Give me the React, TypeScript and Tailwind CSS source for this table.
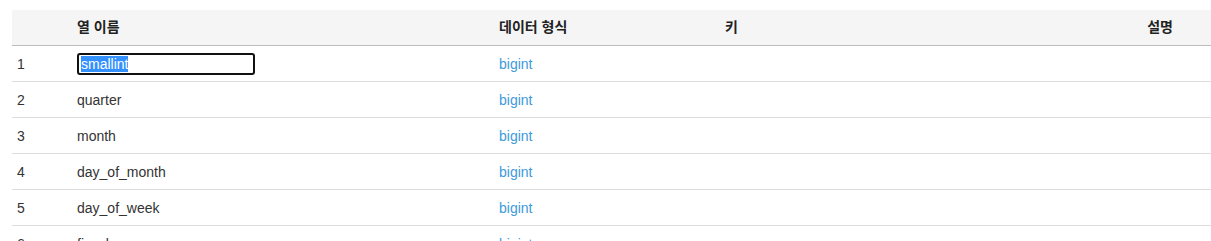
import React from "react";

type Col = { name: string; type: string };

const rows: Col[] = [
  { name: "smallint", type: "bigint" },
  { name: "quarter", type: "bigint" },
  { name: "month", type: "bigint" },
  { name: "day_of_month", type: "bigint" },
  { name: "day_of_week", type: "bigint" },
  { name: "fiscal_year", type: "bigint" },
];

const grid = "grid grid-cols-[60px_422px_226px_1fr]";

export default function App() {
  return (
    <div
      className="bg-white w-[1211px] h-[241px] overflow-hidden pt-[10px] pl-[12px] text-[14px] text-[#333]"
      style={{ fontFamily: '"Liberation Sans", Arial, "Noto Sans CJK KR", sans-serif' }}
    >
      <div className="w-[1199px]">
        {/* header */}
        <div className={`${grid} h-[36px] bg-[#f5f5f5] border-b border-[#bdbdbd] font-bold text-[#222] items-center`}>
          <div className="px-[5px]" />
          <div className="px-[5px]">열 이름</div>
          <div className="px-[5px]">데이터 형식</div>
          <div className="px-[5px] flex">
            <span>키</span>
            <span className="ml-auto pr-[33px]">설명</span>
          </div>
        </div>
        {rows.map((r, i) => (
          <div key={i} className={`${grid} h-[36px] border-b border-[#dddddd] items-center pt-[2px]`}>
            <div className="px-[5px]">{i + 1}</div>
            <div className="px-[5px]">
              {i === 0 ? (
                <div className="w-[178px] h-[22px] -mt-[2px] border-2 border-[#111] rounded-[3px] flex items-center pl-[2px]">
                  <span className="bg-[#3390ff] text-white leading-[16px]">{r.name}</span>
                </div>
              ) : (
                r.name
              )}
            </div>
            <div className="px-[5px] text-[#3c99dc]">{r.type}</div>
            <div />
          </div>
        ))}
      </div>
    </div>
  );
}
